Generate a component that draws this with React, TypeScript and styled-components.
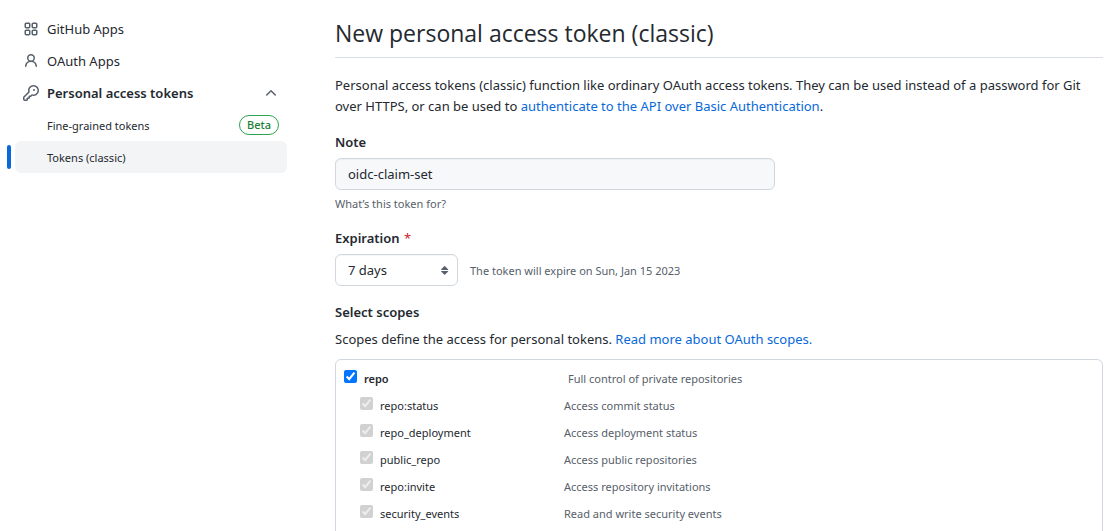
import React from "react";
import styled, { createGlobalStyle } from "styled-components";

const GlobalStyle = createGlobalStyle`
  *, *::before, *::after { box-sizing: border-box; }
  html { scrollbar-width: none; }
  body {
    margin: 0;
    background: #ffffff;
    color: #24292f;
    font-family: "Noto Sans", "Open Sans", sans-serif;
    font-size: 13px;
    line-height: 21px;
  }
`;

const Page = styled.div`
  display: flex;
  align-items: flex-start;
  gap: 48px;
  padding: 13px 7px 0 15px;
`;

const Sidebar = styled.nav`
  flex: 0 0 272px;
`;

const NavList = styled.ul`
  list-style: none;
  margin: 0;
  padding: 0;
`;

const navRow = `
  position: relative;
  display: flex;
  align-items: center;
  gap: 8px;
  width: 100%;
  height: 32px;
  padding: 0 8px;
  border: 0;
  border-radius: 6px;
  color: #24292f;
  font-family: inherit;
  text-align: left;
  text-decoration: none;
`;

const NavLink = styled.a`
  ${navRow}
`;

const NavToggle = styled.button`
  ${navRow}
  background: none;
  font-size: 13px;
  font-weight: 600;
  cursor: pointer;
`;

const SubLink = styled.a<{ $current?: boolean }>`
  ${navRow}
  padding-left: 32px;
  font-size: 11px;
  background: ${(p) => (p.$current ? "#f3f4f6" : "transparent")};

  &::before {
    content: "";
    display: ${(p) => (p.$current ? "block" : "none")};
    position: absolute;
    left: -8px;
    top: 4px;
    width: 4px;
    height: 24px;
    border-radius: 6px;
    background: #0969da;
  }
`;

const RowText = styled.span`
  flex: 1;
`;

const Badge = styled.span`
  height: 20px;
  padding: 0 7px;
  border: 1px solid #2da44e;
  border-radius: 10px;
  color: #1a7f37;
  font-size: 11px;
  font-weight: 500;
  line-height: 18px;
`;

const Icon = styled.svg`
  flex: none;
  width: 16px;
  height: 16px;
  fill: #57606a;
`;

const Main = styled.main`
  flex: 1;
  min-width: 0;
`;

const Title = styled.h1`
  margin: 0 0 17px;
  padding: 4px 0 8px;
  border-bottom: 1px solid #d8dee4;
  font-family: "Open Sans", sans-serif;
  font-size: 23px;
  font-weight: 400;
  line-height: 32px;
`;

const Text = styled.p`
  margin: 0;
`;

const Link = styled.a`
  color: #0969da;
  text-decoration: none;
`;

const Field = styled.div`
  margin-top: 15px;
`;

const Label = styled.label`
  display: block;
  margin-bottom: 5px;
  font-weight: 600;
`;

const Required = styled.span`
  margin-left: 1px;
  color: #cf222e;
  font-weight: 400;
`;

const TextInput = styled.input`
  display: block;
  width: 440px;
  max-width: 100%;
  height: 32px;
  padding: 0 12px;
  border: 1px solid #d0d7de;
  border-radius: 6px;
  background: #f6f8fa;
  box-shadow: inset 0 1px 0 rgba(208, 215, 222, 0.2);
  color: #24292f;
  font-family: inherit;
  font-size: 13px;
`;

const Hint = styled.p`
  margin: 4px 0 0;
  color: #57606a;
  font-size: 11px;
  line-height: 19px;
`;

const SelectRow = styled.div`
  display: flex;
  align-items: center;
  gap: 12px;
`;

const SelectBox = styled.div`
  position: relative;
  width: 123px;

  svg {
    position: absolute;
    right: 5px;
    top: 8px;
    pointer-events: none;
  }
`;

const Select = styled.select`
  display: block;
  appearance: none;
  width: 100%;
  height: 32px;
  padding: 0 24px 0 12px;
  border: 1px solid #d0d7de;
  border-radius: 6px;
  background: #ffffff;
  box-shadow: inset 0 1px 0 rgba(208, 215, 222, 0.2);
  color: #24292f;
  font-family: inherit;
  font-size: 13px;
`;

const Expiry = styled.span`
  color: #57606a;
  font-size: 11px;
  line-height: 19px;
`;

const SectionTitle = styled.h2`
  margin: 16px 0 6px;
  font-size: 13px;
  font-weight: 600;
  line-height: 21px;
`;

const ScopeBox = styled.div`
  margin-top: 9px;
  padding: 5px 8px 16px;
  border: 1px solid #d0d7de;
  border-radius: 6px;
`;

const ScopeList = styled.ul`
  list-style: none;
  margin: 0;
  padding: 0;
`;

const ScopeRow = styled.li<{ $child?: boolean }>`
  display: flex;
  align-items: center;
  height: 27px;
  padding-left: ${(p) => (p.$child ? 16 : 0)}px;
  font-size: 11px;
`;

const ScopeLabel = styled.label<{ $child?: boolean }>`
  display: flex;
  align-items: center;
  gap: 7px;
  width: ${(p) => (p.$child ? 204 : 224)}px;
  font-weight: ${(p) => (p.$child ? 400 : 600)};

  input {
    width: 13px;
    height: 13px;
    margin: 0 0 4px;
  }
`;

const ScopeDescription = styled.span`
  color: #57606a;
`;

const paths = {
  apps: "M1.5 3.25c0-.966.784-1.75 1.75-1.75h2.5c.966 0 1.75.784 1.75 1.75v2.5A1.75 1.75 0 0 1 5.75 7.5h-2.5A1.75 1.75 0 0 1 1.5 5.75Zm7 0c0-.966.784-1.75 1.75-1.75h2.5c.966 0 1.75.784 1.75 1.75v2.5a1.75 1.75 0 0 1-1.75 1.75h-2.5A1.75 1.75 0 0 1 8.5 5.75Zm-7 7c0-.966.784-1.75 1.75-1.75h2.5c.966 0 1.75.784 1.75 1.75v2.5a1.75 1.75 0 0 1-1.75 1.75h-2.5a1.75 1.75 0 0 1-1.75-1.75Zm7 0c0-.966.784-1.75 1.75-1.75h2.5c.966 0 1.75.784 1.75 1.75v2.5a1.75 1.75 0 0 1-1.75 1.75h-2.5a1.75 1.75 0 0 1-1.75-1.75ZM3.25 3a.25.25 0 0 0-.25.25v2.5c0 .138.112.25.25.25h2.5A.25.25 0 0 0 6 5.75v-2.5A.25.25 0 0 0 5.75 3Zm7 0a.25.25 0 0 0-.25.25v2.5c0 .138.112.25.25.25h2.5a.25.25 0 0 0 .25-.25v-2.5a.25.25 0 0 0-.25-.25Zm-7 7a.25.25 0 0 0-.25.25v2.5c0 .138.112.25.25.25h2.5a.25.25 0 0 0 .25-.25v-2.5a.25.25 0 0 0-.25-.25Zm7 0a.25.25 0 0 0-.25.25v2.5c0 .138.112.25.25.25h2.5a.25.25 0 0 0 .25-.25v-2.5a.25.25 0 0 0-.25-.25Z",
  person: "M10.561 8.073a6.005 6.005 0 0 1 3.432 5.142.75.75 0 1 1-1.498.07 4.5 4.5 0 0 0-8.99 0 .75.75 0 0 1-1.498-.07 6.004 6.004 0 0 1 3.431-5.142 3.999 3.999 0 1 1 5.123 0ZM10.5 5a2.5 2.5 0 1 0-5 0 2.5 2.5 0 0 0 5 0Z",
  key: "M10.5 0a5.499 5.499 0 1 1-1.288 10.848l-.932.932a.749.749 0 0 1-.53.22H7v.75a.749.749 0 0 1-.22.53l-.5.5a.749.749 0 0 1-.53.22H5v.75a.749.749 0 0 1-.22.53l-.5.5a.749.749 0 0 1-.53.22h-2A1.75 1.75 0 0 1 0 14.25v-2c0-.199.079-.389.22-.53l4.932-4.932A5.5 5.5 0 0 1 10.5 0Zm-4 5.5c-.001.431.069.86.205 1.269a.75.75 0 0 1-.181.768L1.5 12.56v1.69c0 .138.112.25.25.25h1.69l.06-.06v-1.19a.75.75 0 0 1 .75-.75h1.19l.06-.06v-1.19a.75.75 0 0 1 .75-.75h1.19l1.023-1.025a.75.75 0 0 1 .768-.18A4 4 0 1 0 6.5 5.5ZM11 6a1 1 0 1 1 0-2 1 1 0 0 1 0 2Z",
  chevronUp: "M3.22 10.53a.749.749 0 0 1 0-1.06l4.25-4.25a.749.749 0 0 1 1.06 0l4.25 4.25a.749.749 0 1 1-1.06 1.06L8 6.811 4.28 10.53a.749.749 0 0 1-1.06 0Z",
  sort: "m4.074 9.427 3.396 3.396a.25.25 0 0 0 .354 0l3.396-3.396A.25.25 0 0 0 11.043 9H4.251a.25.25 0 0 0-.177.427ZM4.074 7.47 7.47 4.073a.25.25 0 0 1 .354 0L11.22 7.47a.25.25 0 0 1-.177.426H4.251a.25.25 0 0 1-.177-.426Z",
};

function Octicon({ name }: { name: keyof typeof paths }) {
  return (
    <Icon viewBox="0 0 16 16" aria-hidden="true">
      <path d={paths[name]} fillRule="evenodd" />
    </Icon>
  );
}

const childScopes = [
  { name: "repo:status", description: "Access commit status" },
  { name: "repo_deployment", description: "Access deployment status" },
  { name: "public_repo", description: "Access public repositories" },
  { name: "repo:invite", description: "Access repository invitations" },
  { name: "security_events", description: "Read and write security events" },
];

export default function App() {
  return (
    <>
      <GlobalStyle />
      <Page>
        <Sidebar>
          <NavList>
            <li>
              <NavLink href="#apps">
                <Octicon name="apps" />
                <RowText>GitHub Apps</RowText>
              </NavLink>
            </li>
            <li>
              <NavLink href="#oauth">
                <Octicon name="person" />
                <RowText>OAuth Apps</RowText>
              </NavLink>
            </li>
            <li>
              <NavToggle type="button" aria-expanded="true">
                <Octicon name="key" />
                <RowText>Personal access tokens</RowText>
                <Octicon name="chevronUp" />
              </NavToggle>
              <NavList>
                <li>
                  <SubLink href="#fine-grained">
                    <RowText>Fine-grained tokens</RowText>
                    <Badge>Beta</Badge>
                  </SubLink>
                </li>
                <li>
                  <SubLink href="#classic" $current aria-current="page">
                    <RowText>Tokens (classic)</RowText>
                  </SubLink>
                </li>
              </NavList>
            </li>
          </NavList>
        </Sidebar>

        <Main>
          <Title>New personal access token (classic)</Title>
          <Text>
            Personal access tokens (classic) function like ordinary OAuth access tokens. They can be
            used instead of a password for Git over HTTPS, or can be used to{" "}
            <Link href="#basic-auth">authenticate to the API over Basic Authentication</Link>.
          </Text>

          <Field>
            <Label htmlFor="note">Note</Label>
            <TextInput id="note" type="text" defaultValue="oidc-claim-set" />
            <Hint>What’s this token for?</Hint>
          </Field>

          <Field>
            <Label htmlFor="expiration">
              Expiration <Required>*</Required>
            </Label>
            <SelectRow>
              <SelectBox>
                <Select id="expiration" defaultValue="7">
                  <option value="7">7 days</option>
                </Select>
                <Octicon name="sort" />
              </SelectBox>
              <Expiry>The token will expire on Sun, Jan 15 2023</Expiry>
            </SelectRow>
          </Field>

          <SectionTitle>Select scopes</SectionTitle>
          <Text>
            Scopes define the access for personal tokens.{" "}
            <Link href="#scopes">Read more about OAuth scopes.</Link>
          </Text>

          <ScopeBox>
            <ScopeList>
              <ScopeRow>
                <ScopeLabel>
                  <input type="checkbox" defaultChecked />
                  repo
                </ScopeLabel>
                <ScopeDescription>Full control of private repositories</ScopeDescription>
              </ScopeRow>
              {childScopes.map((scope) => (
                <ScopeRow key={scope.name} $child>
                  <ScopeLabel $child>
                    <input type="checkbox" defaultChecked disabled />
                    {scope.name}
                  </ScopeLabel>
                  <ScopeDescription>{scope.description}</ScopeDescription>
                </ScopeRow>
              ))}
            </ScopeList>
          </ScopeBox>
        </Main>
      </Page>
    </>
  );
}
